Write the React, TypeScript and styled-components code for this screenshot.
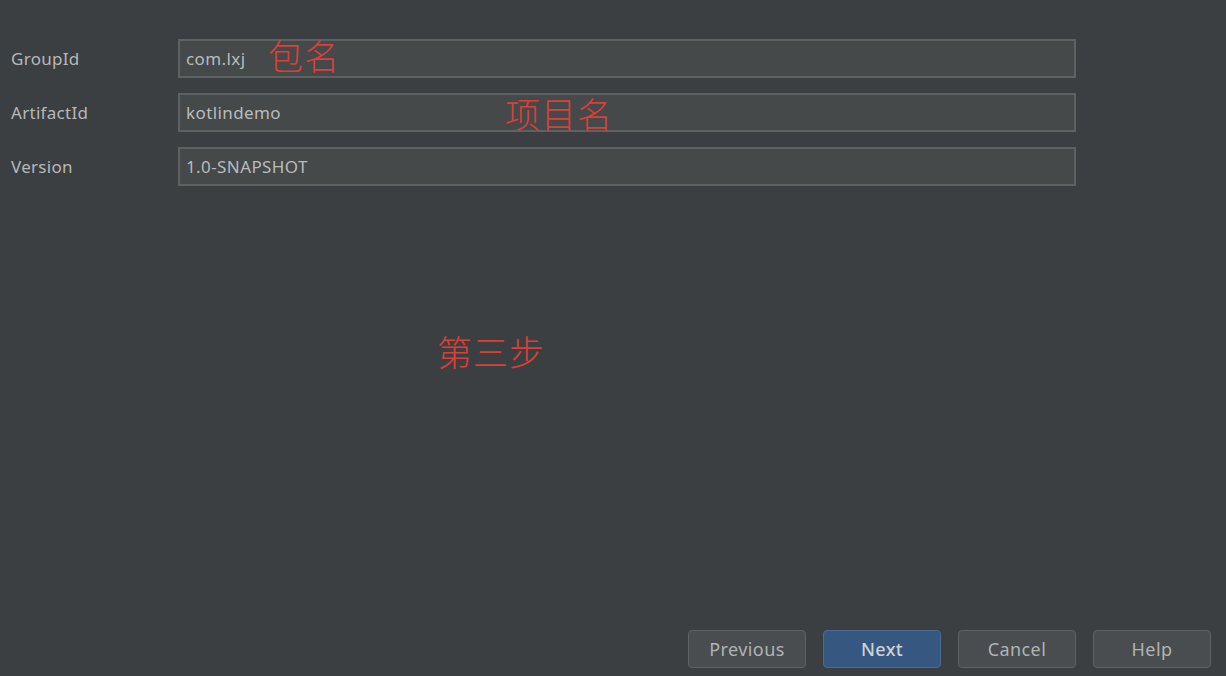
import styled, { createGlobalStyle } from 'styled-components';

const GlobalStyle = createGlobalStyle`
  html, body {
    margin: 0;
    padding: 0;
    background: #3c3f41;
  }
  #root {
    height: 676px;
  }
`;

const Page = styled.div`
  position: relative;
  display: flex;
  flex-direction: column;
  height: 676px;
  background: #3c3f41;
  font-family: 'Noto Sans', 'Open Sans', sans-serif;
  color: #bbbbbb;
  overflow: hidden;
`;

const Form = styled.div`
  display: grid;
  grid-template-columns: 167px 898px;
  grid-auto-rows: 39px;
  row-gap: 15px;
  padding: 39px 0 0 11px;
  align-items: center;
`;

const Label = styled.label`
  font-size: 17px;
  letter-spacing: 0.3px;
  color: #b6b8b9;
`;

const FieldBox = styled.div`
  position: relative;
  height: 100%;
  box-sizing: border-box;
  border: 2px solid #5d6162;
  background: #45494a;
  display: flex;
  align-items: center;
  padding-left: 6px;
  font-size: 17px;
  letter-spacing: 0.4px;
  color: #b9bbbc;
`;

const Note = styled.span<{ $left: number; $top: number }>`
  position: absolute;
  left: ${p => p.$left}px;
  top: ${p => p.$top}px;
  font-family: 'Noto Sans CJK SC', sans-serif;
  font-weight: 300;
  font-size: 35px;
  line-height: 1;
  color: #d8403a;
  letter-spacing: 1px;
  white-space: nowrap;
`;

const Spacer = styled.div`
  flex: 1;
`;

const Footer = styled.div`
  display: flex;
  justify-content: flex-end;
  gap: 17px;
  padding: 0 15px 8px 0;
`;

const Button = styled.button<{ $primary?: boolean }>`
  width: 118px;
  height: 38px;
  box-sizing: border-box;
  border-radius: 4px;
  border: 1px solid ${p => (p.$primary ? '#4a6b93' : '#5e6263')};
  background: ${p => (p.$primary ? '#365880' : '#494d4f')};
  color: ${p => (p.$primary ? '#cdd2d7' : '#b0b3b4')};
  font-family: 'Noto Sans', 'Open Sans', sans-serif;
  font-size: 18px;
  letter-spacing: 0.4px;
  font-weight: ${p => (p.$primary ? 500 : 400)};
  padding: 0;
`;

const fields = [
  { label: 'GroupId', value: 'com.lxj', note: '包名', noteLeft: 88, noteTop: -4 },
  { label: 'ArtifactId', value: 'kotlindemo', note: '项目名', noteLeft: 325, noteTop: 0 },
  { label: 'Version', value: '1.0-SNAPSHOT' },
];

export default function App() {
  return (
    <>
      <GlobalStyle />
      <Page>
        <Form>
          {fields.map(f => (
            <>
              <Label key={f.label + '-l'}>{f.label}</Label>
              <FieldBox key={f.label + '-f'}>
                {f.value}
                {f.note && (
                  <Note $left={f.noteLeft!} $top={f.noteTop!}>
                    {f.note}
                  </Note>
                )}
              </FieldBox>
            </>
          ))}
        </Form>
        <Note $left={437} $top={333}>第三步</Note>
        <Spacer />
        <Footer>
          <Button>Previous</Button>
          <Button $primary>Next</Button>
          <Button>Cancel</Button>
          <Button>Help</Button>
        </Footer>
      </Page>
    </>
  );
}
